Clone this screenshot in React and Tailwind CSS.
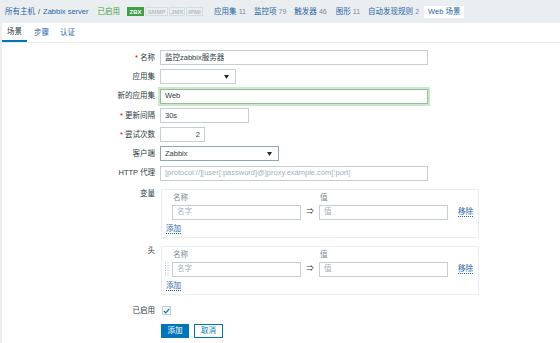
import React from 'react';

const font = { fontFamily: '"Liberation Sans", "Noto Sans CJK SC", sans-serif' };

const Arrow = () => (
    <svg width="5" height="4" viewBox="0 0 5 4" className="shrink-0">
        <path d="M0 0 H5 L2.5 4 Z" fill="#1f2c33" />
    </svg>
);

const Handle = () => (
    <svg width="4" height="14" viewBox="0 0 4 14">
        {[1, 3.5, 6, 8.5, 11, 13].map((y) => (
            <g key={y}>
                <rect x="0" y={y - 0.5} width="1" height="1" fill="#acbbc2" />
                <rect x="2.5" y={y - 0.5} width="1" height="1" fill="#acbbc2" />
            </g>
        ))}
    </svg>
);

const Label = ({ required, children, top }) => (
    <div className={`w-[153px] shrink-0 text-right text-[#2e3b42] ${top ? 'leading-[10px]' : ''}`}>
        {required && <span className="text-[#d40000]">* </span>}
        {children}
    </div>
);

const Input = ({ className = '', children, placeholder }) => (
    <div className={`h-[15px] border border-[#c3cdd2] bg-white flex items-center px-[4px] ${className}`}>
        {children ? (
            <span className="text-[#2e3b42] truncate">{children}</span>
        ) : (
            <span className="text-[#a3b1b8] truncate">{placeholder}</span>
        )}
    </div>
);

const LinkAction = ({ children }) => (
    <span className="text-[#1f65a6] border-b border-dotted border-[#1f65a6] leading-[9px]">{children}</span>
);

const PairBox = ({ handle }) => (
    <div className="w-[318px] border border-[#ebeef0] pt-[3px] pb-[3px] pl-[3px]">
        <div className="flex h-[10px] items-center text-[#768d99]">
            <div className="w-[7px]" />
            <div className="w-[129px] pl-[1px]">名称</div>
            <div className="w-[18px]" />
            <div className="pl-[1px]">值</div>
        </div>
        <div className="flex items-center mt-[2px]">
            <div className="w-[7px] flex items-center">{handle && <Handle />}</div>
            <Input className="w-[129px]" placeholder="名字" />
            <div className="w-[18px] text-center text-[#2e3b42]">⇒</div>
            <Input className="w-[129px]" placeholder="值" />
            <div className="ml-[10px]">
                <LinkAction>移除</LinkAction>
            </div>
        </div>
        <div className="mt-[4px] pl-[1px] h-[10px] flex items-center">
            <LinkAction>添加</LinkAction>
        </div>
    </div>
);

export default function App() {
    return (
        <div className="w-[560px] h-[343px] overflow-hidden bg-[#ebeef0] text-[7.5px]" style={font}>
            {/* Host navigation */}
            <div className="h-[23px] flex items-center pl-[5px] whitespace-nowrap">
                <span className="text-[#1f65a6]">所有主机</span>
                <span className="mx-[3px] text-[#2e3b42]">/</span>
                <span className="text-[#1f65a6]">Zabbix server</span>
                <span className="ml-[9px] text-[#429e47]">已启用</span>
                <div className="ml-[7px] flex h-[9px] text-[6px] font-bold leading-none">
                    <span className="bg-[#429e47] text-white px-[2px] flex items-center w-[17px] justify-center">ZBX</span>
                    <span className="border border-[#d5dde1] text-[#b4c0c6] flex items-center w-[23px] justify-center ml-[1px]">SNMP</span>
                    <span className="border border-[#d5dde1] text-[#b4c0c6] flex items-center w-[16px] justify-center ml-[1px]">JMX</span>
                    <span className="border border-[#d5dde1] text-[#b4c0c6] flex items-center w-[17px] justify-center ml-[1px]">IPMI</span>
                </div>
                <span className="ml-[11px] text-[#1f65a6]">应用集 <span className="text-[#768d99] text-[7px]">11</span></span>
                <span className="ml-[8px] text-[#1f65a6]">监控项 <span className="text-[#768d99] text-[7px]">79</span></span>
                <span className="ml-[8px] text-[#1f65a6]">触发器 <span className="text-[#768d99] text-[7px]">46</span></span>
                <span className="ml-[9px] text-[#1f65a6]">图形 <span className="text-[#768d99] text-[7px]">11</span></span>
                <span className="ml-[8px] text-[#1f65a6]">自动发现规则 <span className="text-[#768d99] text-[7px]">2</span></span>
                <span className="ml-[5px] bg-white text-[#1f65a6] px-[4px] h-[12px] flex items-center">Web 场景</span>
            </div>

            <div className="ml-[2px] bg-white h-[320px]">
                {/* Tabs */}
                <div className="h-[20px] flex border-b border-[#ebeef0]">
                    <div className="px-[5px] flex items-center text-[#2e3b42] border-b-2 border-[#0275b8]">场景</div>
                    <div className="ml-[2px] px-[5px] flex items-center text-[#1f65a6]">步骤</div>
                    <div className="ml-[1px] px-[5px] flex items-center text-[#1f65a6]">认证</div>
                </div>

                {/* Form */}
                <div className="pt-[7px] flex flex-col">
                    <div className="flex flex-col gap-[4.25px]">
                        <div className="flex items-center gap-[5px] h-[15px]">
                            <Label required>名称</Label>
                            <Input className="w-[268px]">监控zabbix服务器</Input>
                        </div>
                        <div className="flex items-center gap-[5px] h-[15px]">
                            <Label>应用集</Label>
                            <div className="h-[15px] w-[76px] border border-[#c3cdd2] flex items-center justify-end pr-[6px]">
                                <Arrow />
                            </div>
                        </div>
                        <div className="flex items-center gap-[5px] h-[15px]">
                            <Label>新的应用集</Label>
                            <div className="h-[15px] w-[268px] border border-[#8fc492] outline-2 outline-[#cbe7cc] flex items-center px-[4px] text-[#2e3b42]">
                                Web
                            </div>
                        </div>
                        <div className="flex items-center gap-[5px] h-[15px]">
                            <Label required>更新间隔</Label>
                            <Input className="w-[89px]">30s</Input>
                        </div>
                        <div className="flex items-center gap-[5px] h-[15px]">
                            <Label required>尝试次数</Label>
                            <Input className="w-[45px] justify-end">2</Input>
                        </div>
                        <div className="flex items-center gap-[5px] h-[15px]">
                            <Label>客户端</Label>
                            <div className="h-[15px] w-[119px] border border-[#8ea7b4] flex items-center justify-between px-[4px] pr-[6px] text-[#2e3b42]">
                                Zabbix
                                <Arrow />
                            </div>
                        </div>
                        <div className="flex items-center gap-[5px] h-[15px]">
                            <Label>HTTP 代理</Label>
                            <Input className="w-[268px]" placeholder="[protocol://][user[:password]@]proxy.example.com[:port]" />
                        </div>
                    </div>

                    <div className="flex gap-[6px] mt-[8px]">
                        <Label top>变量</Label>
                        <PairBox />
                    </div>

                    <div className="flex gap-[6px] mt-[8px]">
                        <Label top>头</Label>
                        <PairBox handle />
                    </div>

                    <div className="flex items-center gap-[7px] mt-[11px] h-[10px]">
                        <Label>已启用</Label>
                        <div className="w-[9px] h-[9px] border border-[#c3cdd2] flex items-center justify-center">
                            <svg width="7" height="6" viewBox="0 0 7 6">
                                <path d="M0.8 3 L2.7 4.8 L6.2 1" stroke="#0275b8" strokeWidth="1.2" fill="none" />
                            </svg>
                        </div>
                    </div>

                    <div className="flex gap-[5px] mt-[8px] ml-[159px]">
                        <div className="h-[14px] w-[28px] bg-[#0275b8] border border-[#0275b8] text-white flex items-center justify-center">添加</div>
                        <div className="h-[14px] w-[29px] bg-white border border-[#0275b8] text-[#0275b8] flex items-center justify-center">取消</div>
                    </div>
                </div>
            </div>
        </div>
    );
}
